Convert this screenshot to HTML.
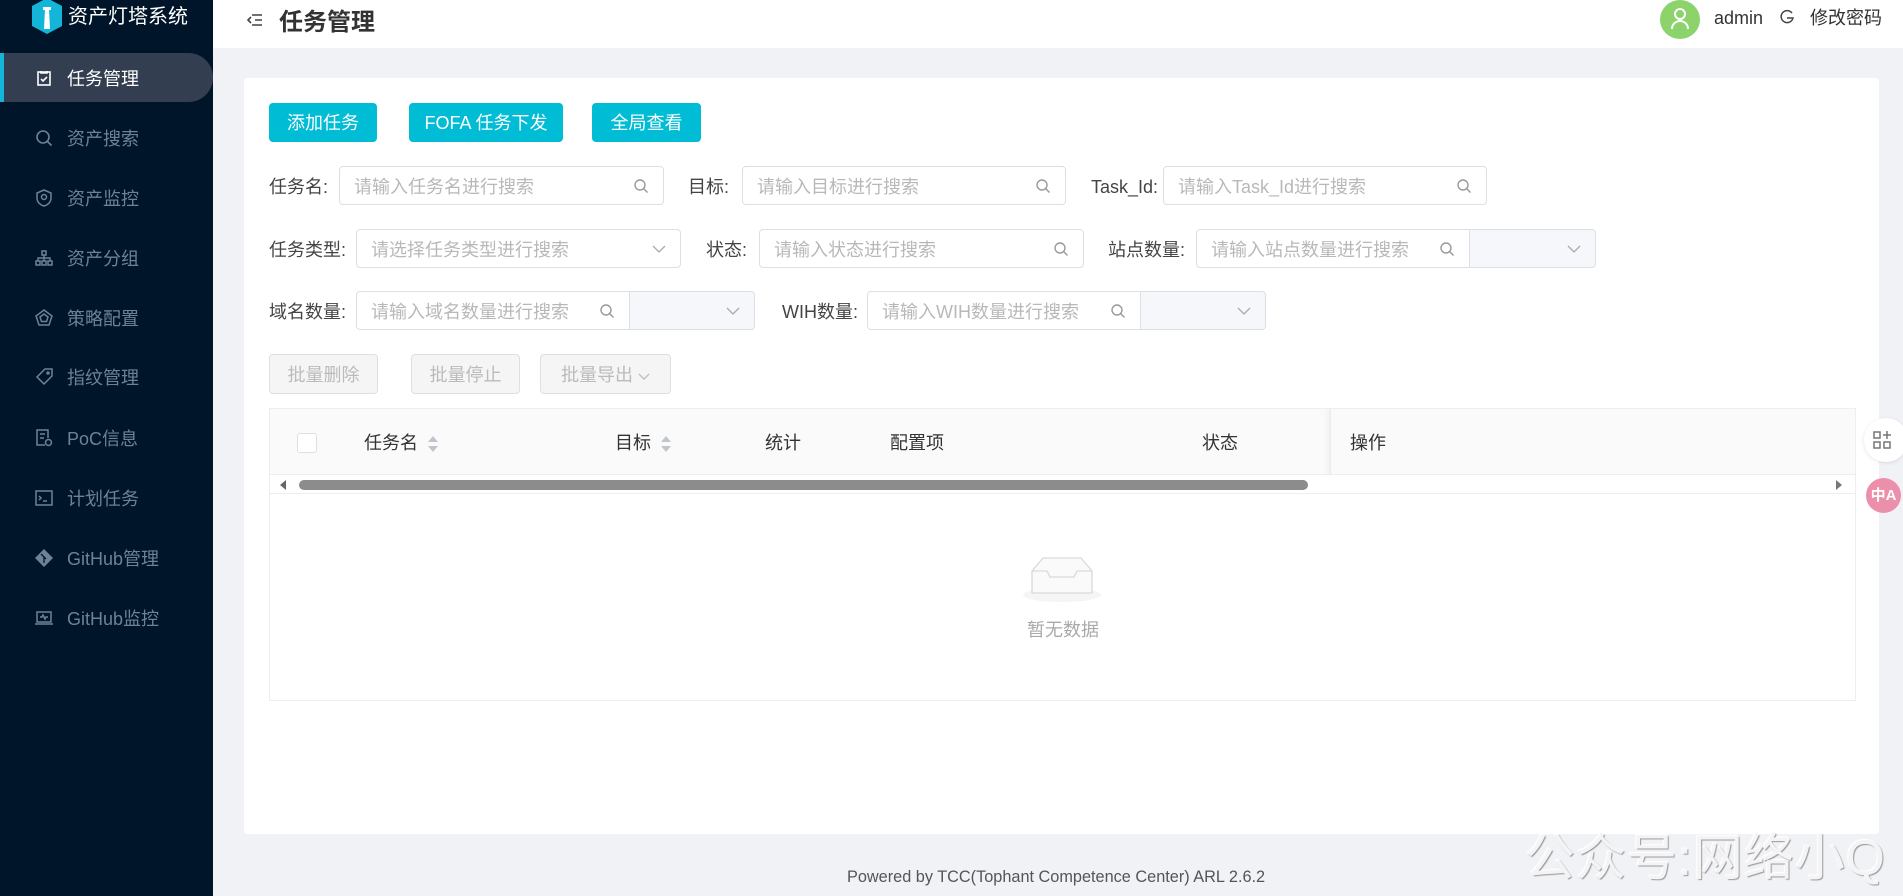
<!DOCTYPE html>
<html><head><meta charset="utf-8">
<style>
*{box-sizing:border-box;margin:0;padding:0}
body{width:1903px;height:896px;overflow:hidden;background:#f0f2f5;font-family:"Liberation Sans","Noto Sans CJK SC",sans-serif;position:relative;color:#333}
.a{position:absolute}
#side{left:0;top:0;width:213px;height:896px;background:#001529}
.mi{position:absolute;left:0;width:213px;height:48px;color:#6d8198;font-size:18px;line-height:50px}
.mi .ic{position:absolute;left:35px;top:15px;width:18px;height:18px}
.mi span{position:absolute;left:67px}
#hdr{left:213px;top:0;width:1690px;height:48px;background:#fff}
.btn{position:absolute;height:39px;background:#00bcd4;color:#fff;border-radius:4px;font-size:18px;line-height:41px;text-align:center}
.dbtn{position:absolute;height:40px;border:1px solid #dcdfe6;background:#f5f5f5;color:#bbb;border-radius:4px;font-size:18px;line-height:40px;text-align:center}
.lb{position:absolute;font-size:18px;color:#444;line-height:42px}
.in{position:absolute;height:39px;border:1px solid #dcdfe6;border-radius:4px;background:#fff;font-size:18px;color:#b8b8b8;line-height:40px;padding-left:14px}
.in svg{position:absolute;right:14px;top:11px}
.sel{position:absolute;height:39px;border:1px solid #dcdfe6;border-radius:0 4px 4px 0;background:#f5f7fa}
.sel svg,.in .ch{position:absolute;right:14px;top:13px}
.th{position:absolute;top:408px;line-height:70px;font-size:18px;color:#333}
.sort{display:inline-block;vertical-align:middle;margin-left:10px;width:10px;height:16px;position:relative}
.sort:before{content:"";position:absolute;left:0;top:0;border:5px solid transparent;border-bottom:6px solid #c0c4cc;border-top:0}
.sort:after{content:"";position:absolute;left:0;bottom:0;border:5px solid transparent;border-top:6px solid #c0c4cc;border-bottom:0}
</style></head><body>
<div id="side" class="a">
  <svg class="a" style="left:30px;top:0" width="34" height="34" viewBox="0 0 34 34"><path d="M17 -2 L32 6 L32 26 L17 34 L2 26 L2 6Z" fill="#13b6d8"/><path d="M15 9h4l1 20h-6z" fill="#fff"/><rect x="13" y="7" width="8" height="3" fill="#fff"/></svg>
  <div class="a" style="left:68px;top:3px;font-size:20px;color:#fff;line-height:28px">资产灯塔系统</div>
  <div class="a" style="left:0;top:53px;width:213px;height:49px;background:#333f50;border-radius:0 25px 25px 0"></div>
  <div class="a" style="left:0;top:53px;width:4px;height:49px;background:#13b6d8"></div>
  <div class="mi" style="top:54px;color:#fff"><svg class="ic" viewBox="0 0 18 18" fill="none" stroke="#fff" stroke-width="1.6"><rect x="3" y="3" width="12" height="13"/><path d="M6 2v2h6V2M6 10l2 2 4-4"/></svg><span>任务管理</span></div>
  <div class="mi" style="top:114px"><svg class="ic" viewBox="0 0 18 18" fill="none" stroke="#6d8198" stroke-width="1.6"><circle cx="8" cy="8" r="6"/><path d="M12.5 12.5l4 4"/></svg><span>资产搜索</span></div>
  <div class="mi" style="top:174px"><svg class="ic" viewBox="0 0 18 18" fill="none" stroke="#6d8198" stroke-width="1.5"><path d="M9 1l7 3v5c0 4-3 7-7 8-4-1-7-4-7-8V4z"/><circle cx="9" cy="8" r="2.5"/></svg><span>资产监控</span></div>
  <div class="mi" style="top:234px"><svg class="ic" viewBox="0 0 18 18" fill="none" stroke="#6d8198" stroke-width="1.5"><rect x="7" y="2" width="4" height="4"/><rect x="1" y="12" width="4" height="4"/><rect x="7" y="12" width="4" height="4"/><rect x="13" y="12" width="4" height="4"/><path d="M9 6v6M3 12V9h12v3"/></svg><span>资产分组</span></div>
  <div class="mi" style="top:294px"><svg class="ic" viewBox="0 0 18 18" fill="none" stroke="#6d8198" stroke-width="1.5"><path d="M9 1l8 6-3 9H4L1 7z"/><path d="M9 5l4 3-1.5 4.5h-5L5 8z"/></svg><span>策略配置</span></div>
  <div class="mi" style="top:353px"><svg class="ic" viewBox="0 0 18 18" fill="none" stroke="#6d8198" stroke-width="1.5"><path d="M10 1h7v7l-8 8-7-7z"/><circle cx="13" cy="5" r="1"/></svg><span>指纹管理</span></div>
  <div class="mi" style="top:414px"><svg class="ic" viewBox="0 0 18 18" fill="none" stroke="#6d8198" stroke-width="1.5"><path d="M10 16H2V1h11v8M5 5h5M5 9h4"/><circle cx="13.5" cy="13.5" r="3"/></svg><span>PoC信息</span></div>
  <div class="mi" style="top:474px"><svg class="ic" viewBox="0 0 18 18" fill="none" stroke="#6d8198" stroke-width="1.5"><rect x="1" y="2" width="16" height="14"/><path d="M4 7l2 2-2 2M8 12h4"/></svg><span>计划任务</span></div>
  <div class="mi" style="top:534px"><svg class="ic" viewBox="0 0 18 18"><path d="M9 0l9 9-9 9-9-9z" fill="#6d8198"/><path d="M6 5l5 5M9 8v6" stroke="#001529" stroke-width="1.3"/></svg><span>GitHub管理</span></div>
  <div class="mi" style="top:594px"><svg class="ic" viewBox="0 0 18 18" fill="none" stroke="#6d8198" stroke-width="1.5"><rect x="2" y="3" width="14" height="10"/><path d="M0 15h18M5 8h2l1-2 2 4 1-2h2"/></svg><span>GitHub监控</span></div>
</div>
<div id="hdr" class="a">
  <svg class="a" style="left:34px;top:13px" width="16" height="14" viewBox="0 0 16 14" fill="none" stroke="#444" stroke-width="1.6"><path d="M5 2h10M8 7h7M5 12h10M4 4L1 7l3 3"/></svg>
  <div class="a" style="left:66px;top:6px;font-size:24px;font-weight:bold;color:#333;line-height:34px">任务管理</div>
  <div class="a" style="left:1447px;top:0;width:40px;height:39px;border-radius:50%;background:#8bd36a"></div>
  <svg class="a" style="left:1457px;top:6px" width="20" height="24" viewBox="0 0 20 24" fill="none" stroke="#fff" stroke-width="2"><circle cx="10" cy="8" r="5"/><path d="M2 23c0-5 4-8 8-8s8 3 8 8"/></svg>
  <div class="a" style="left:1501px;top:4px;font-size:18px;color:#333;line-height:28px">admin</div>
  <svg class="a" style="left:1566px;top:9px" width="16" height="16" viewBox="0 0 16 16" fill="none" stroke="#444" stroke-width="1.5"><path d="M13 4A6 6 0 1 0 14 9H8"/></svg>
  <div class="a" style="left:1597px;top:4px;font-size:18px;color:#333;line-height:28px">修改密码</div>
</div>
<div class="a" style="left:244px;top:78px;width:1635px;height:756px;background:#fff;border-radius:3px"></div>
<div class="btn" style="left:269px;top:103px;width:108px">添加任务</div>
<div class="btn" style="left:409px;top:103px;width:154px">FOFA 任务下发</div>
<div class="btn" style="left:592px;top:103px;width:109px">全局查看</div>

<svg width="0" height="0" style="position:absolute"><defs><symbol id="q" viewBox="0 0 16 16"><circle cx="7" cy="7" r="5" fill="none" stroke="#999" stroke-width="1.4"/><path d="M10.5 10.5l4 4" stroke="#999" stroke-width="1.4"/></symbol><symbol id="v" viewBox="0 0 14 8"><path d="M1 1l6 6 6-6" fill="none" stroke="#aaa" stroke-width="1.3"/></symbol></defs></svg>

<div class="lb" style="left:269px;top:166px">任务名:</div>
<div class="in" style="left:339px;top:166px;width:325px">请输入任务名进行搜索<svg width="16" height="16"><use href="#q"/></svg></div>
<div class="lb" style="left:688px;top:166px">目标:</div>
<div class="in" style="left:742px;top:166px;width:324px">请输入目标进行搜索<svg width="16" height="16"><use href="#q"/></svg></div>
<div class="lb" style="left:1091px;top:166px">Task_Id:</div>
<div class="in" style="left:1163px;top:166px;width:324px">请输入Task_Id进行搜索<svg width="16" height="16"><use href="#q"/></svg></div>

<div class="lb" style="left:269px;top:229px">任务类型:</div>
<div class="in" style="left:356px;top:229px;width:325px">请选择任务类型进行搜索<svg class="ch" width="14" height="8" style="top:15px"><use href="#v"/></svg></div>
<div class="lb" style="left:706px;top:229px">状态:</div>
<div class="in" style="left:759px;top:229px;width:325px">请输入状态进行搜索<svg width="16" height="16"><use href="#q"/></svg></div>
<div class="lb" style="left:1108px;top:229px">站点数量:</div>
<div class="in" style="left:1196px;top:229px;width:274px;border-radius:4px 0 0 4px">请输入站点数量进行搜索<svg width="16" height="16"><use href="#q"/></svg></div>
<div class="sel" style="left:1469px;top:229px;width:127px"><svg width="14" height="8" style="top:15px"><use href="#v"/></svg></div>

<div class="lb" style="left:269px;top:291px">域名数量:</div>
<div class="in" style="left:356px;top:291px;width:274px;border-radius:4px 0 0 4px">请输入域名数量进行搜索<svg width="16" height="16"><use href="#q"/></svg></div>
<div class="sel" style="left:629px;top:291px;width:126px"><svg width="14" height="8" style="top:15px"><use href="#v"/></svg></div>
<div class="lb" style="left:782px;top:291px">WIH数量:</div>
<div class="in" style="left:867px;top:291px;width:274px;border-radius:4px 0 0 4px">请输入WIH数量进行搜索<svg width="16" height="16"><use href="#q"/></svg></div>
<div class="sel" style="left:1140px;top:291px;width:126px"><svg width="14" height="8" style="top:15px"><use href="#v"/></svg></div>

<div class="dbtn" style="left:269px;top:354px;width:109px">批量删除</div>
<div class="dbtn" style="left:411px;top:354px;width:109px">批量停止</div>
<div class="dbtn" style="left:540px;top:354px;width:131px">批量导出 <svg width="12" height="7" viewBox="0 0 14 8" style="vertical-align:middle"><path d="M1 1l6 6 6-6" fill="none" stroke="#bbb" stroke-width="1.5"/></svg></div>

<div class="a" style="left:269px;top:408px;width:1587px;height:293px;border:1px solid #ebeef5"></div>
<div class="a" style="left:270px;top:409px;width:1585px;height:66px;background:#fafafa;border-bottom:1px solid #ebeef5"></div>
<div class="a" style="left:297px;top:433px;width:20px;height:20px;border:1px solid #dcdfe6;border-radius:3px;background:#fff"></div>
<div class="th" style="left:364px">任务名<i class="sort"></i></div>
<div class="th" style="left:615px">目标<i class="sort"></i></div>
<div class="th" style="left:765px">统计</div>
<div class="th" style="left:890px">配置项</div>
<div class="th" style="left:1202px">状态</div>
<div class="a" style="left:1329px;top:409px;width:2px;height:66px;background:#eee;box-shadow:-2px 0 4px rgba(0,0,0,.06)"></div>
<div class="th" style="left:1350px">操作</div>
<div class="a" style="left:270px;top:475px;width:1585px;height:19px;background:#fff;border-bottom:1px solid #ebeef5"></div>
<div class="a" style="left:280px;top:480px;border:5px solid transparent;border-right:6px solid #666;border-left:0"></div>
<div class="a" style="left:299px;top:480px;width:1009px;height:10px;border-radius:5px;background:#8c8c8c"></div>
<div class="a" style="left:1836px;top:480px;border:5px solid transparent;border-left:6px solid #777;border-right:0"></div>

<svg class="a" style="left:1020px;top:553px" width="84" height="50" viewBox="0 0 84 50"><ellipse cx="42" cy="42" rx="39" ry="7" fill="#f5f5f5"/><path d="M12 18l11-13h38l11 13v22H12z" fill="#fafafa" stroke="#d9d9d9" stroke-width="1.3"/><path d="M12 18h15l3 6h24l3-6h15" fill="none" stroke="#d9d9d9" stroke-width="1.3"/></svg>
<div class="a" style="left:1027px;top:618px;font-size:18px;color:#aaa;line-height:24px">暂无数据</div>

<div class="a" style="left:847px;top:865px;font-size:16.3px;color:#555;line-height:24px">Powered by TCC(Tophant Competence Center) ARL 2.6.2</div>

<div class="a" style="left:1864px;top:418px;width:44px;height:44px;border-radius:50%;background:#fff;box-shadow:0 1px 4px rgba(0,0,0,.1)"></div>
<svg class="a" style="left:1873px;top:430px" width="20" height="20" viewBox="0 0 20 20" fill="none" stroke="#777" stroke-width="1.5"><rect x="1" y="2" width="6" height="6"/><rect x="1" y="12" width="6" height="6"/><rect x="11" y="12" width="6" height="6"/><path d="M14 1v8M10 5h8"/></svg>
<div class="a" style="left:1866px;top:478px;width:35px;height:35px;border-radius:50%;background:#ec8fab;color:#fff;font-size:15px;font-weight:bold;line-height:35px;text-align:center">中A</div>

<div class="a" style="left:1525px;top:826px;font-size:50px;color:#f4f4f6;line-height:64px;letter-spacing:1px;text-shadow:1px 1px 1px #999,-1px -1px 0 #fff">公众号:网络小Q</div>
</body></html>
